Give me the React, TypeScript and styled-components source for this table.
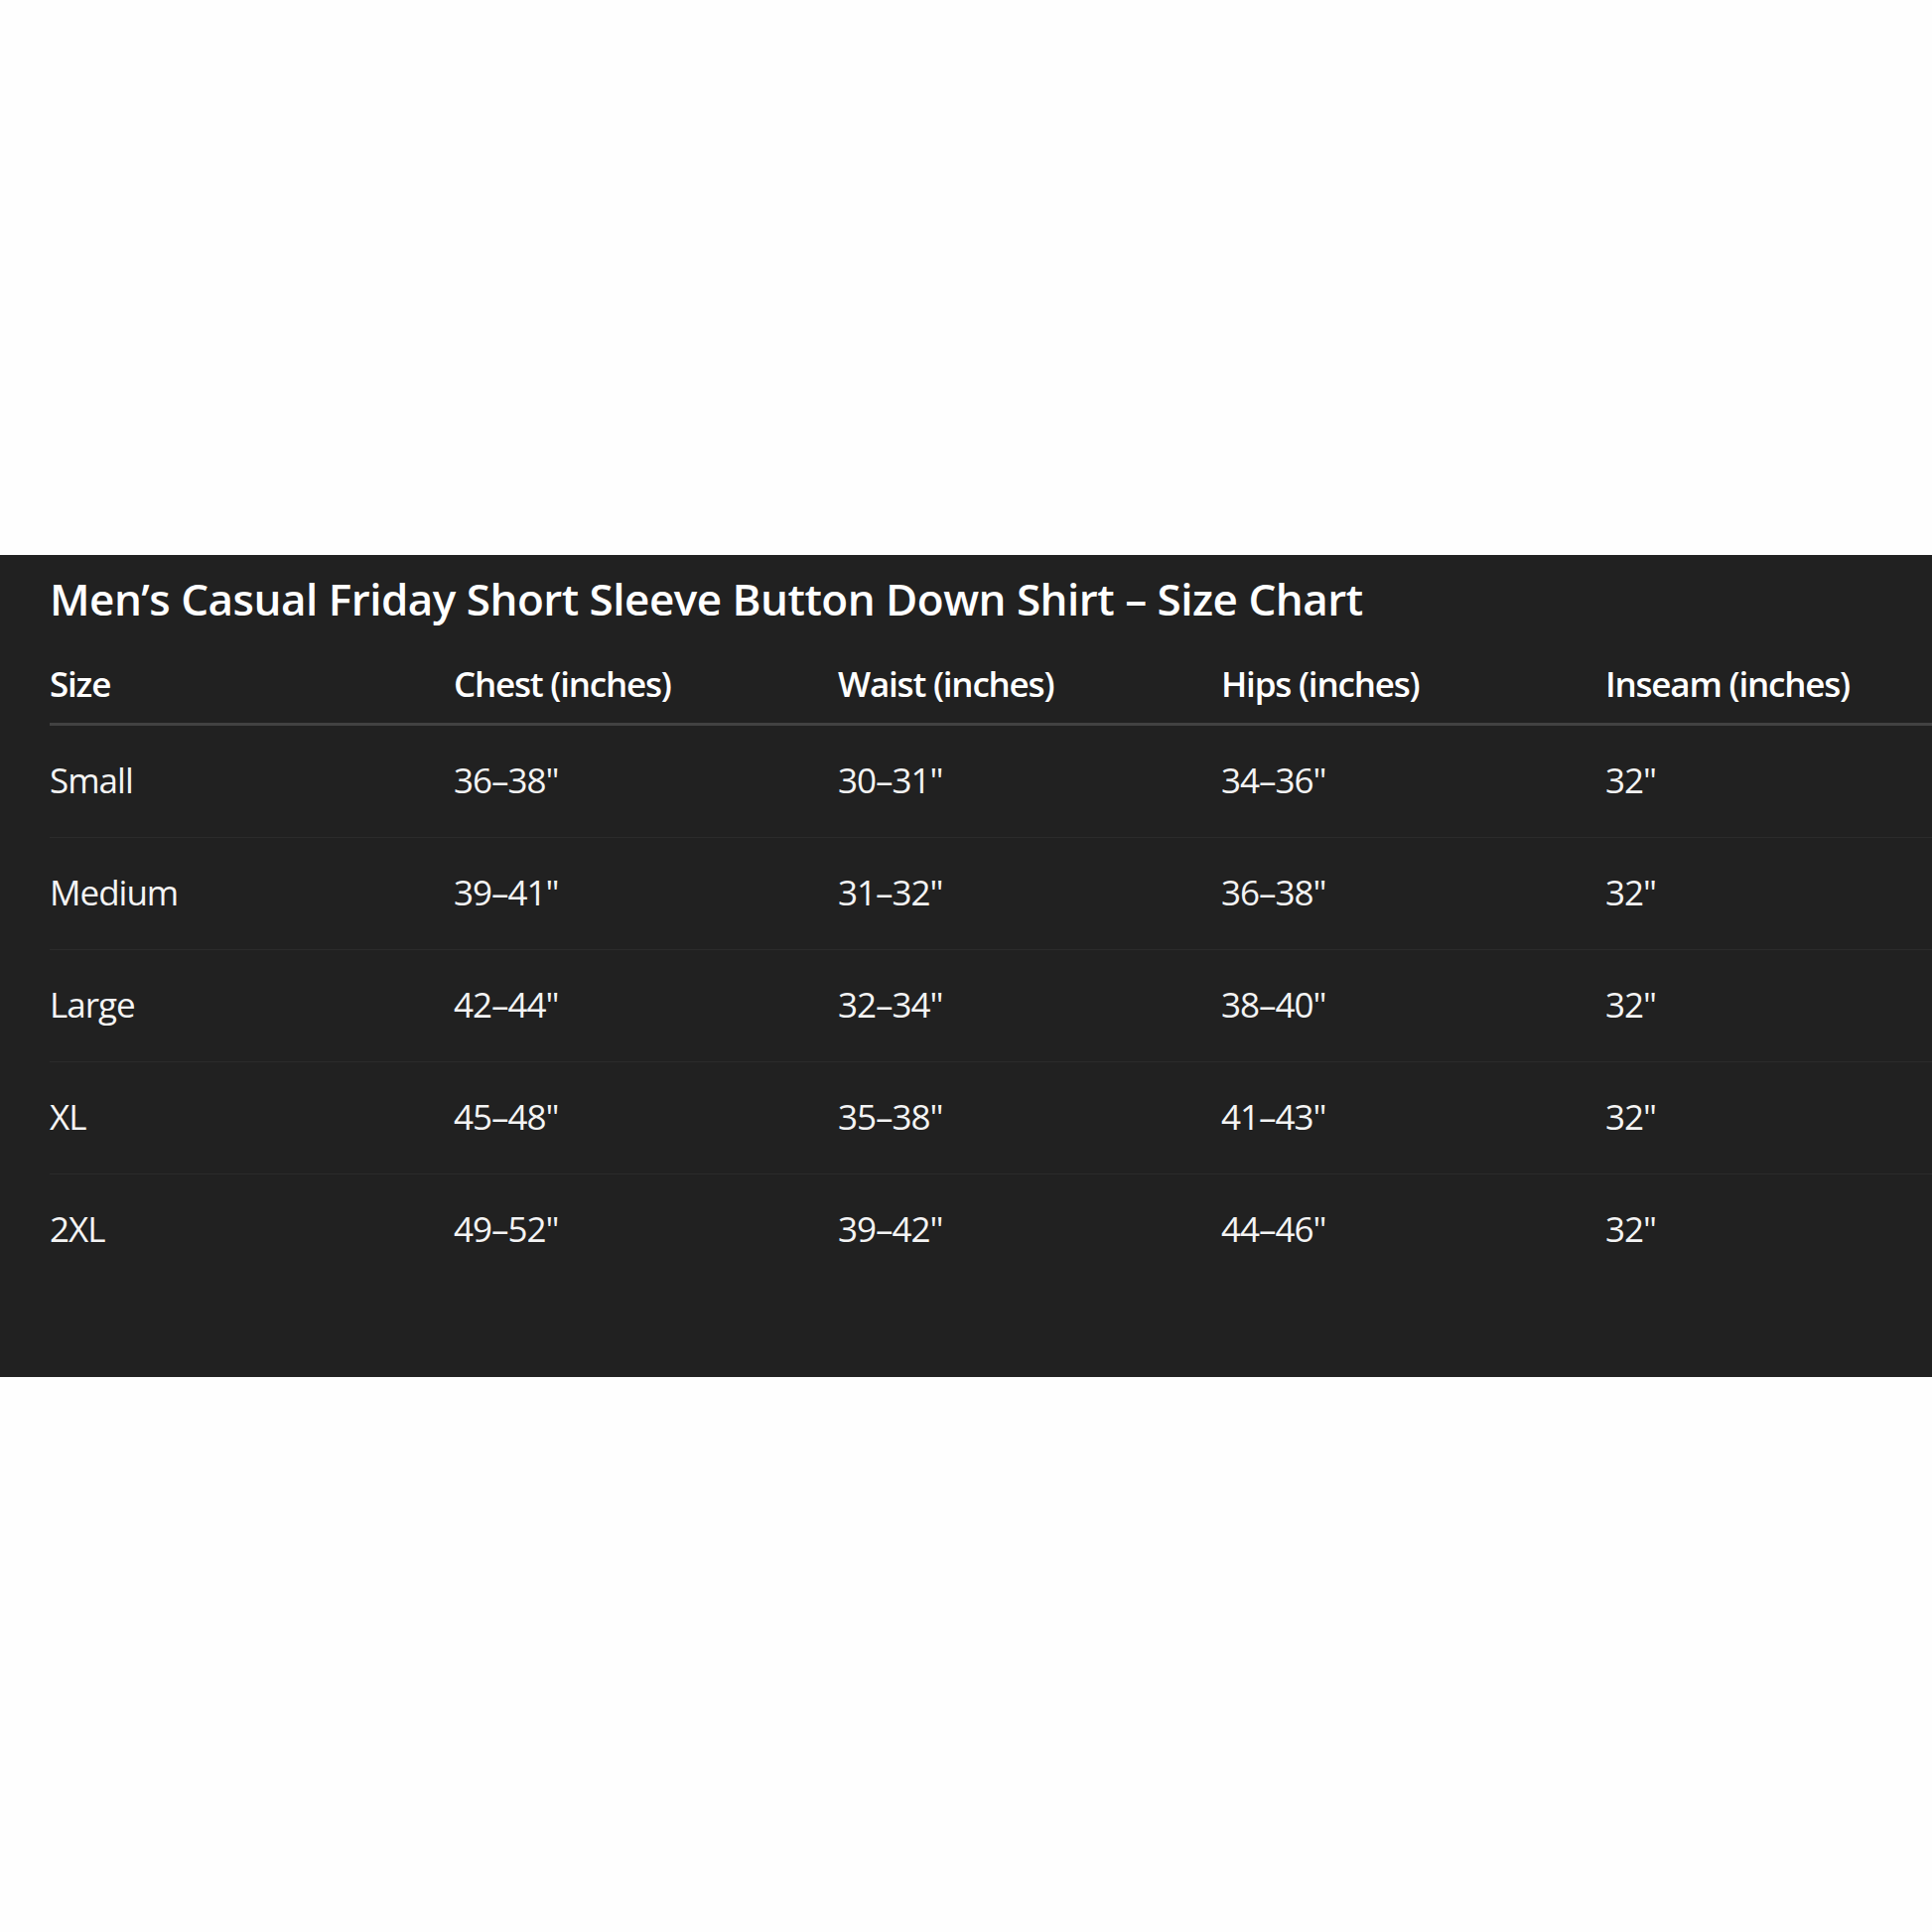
import React from 'react';
import styled, {createGlobalStyle} from "styled-components";

const GlobalStyle = createGlobalStyle`
  html, body {
    margin: 0;
    padding: 0;
    background: #fefefe;
  }
  * {
    box-sizing: border-box;
  }
`

const columns = ["Size", "Chest (inches)", "Waist (inches)", "Hips (inches)", "Inseam (inches)"];

const rows = [
    ["Small", "36–38\"", "30–31\"", "34–36\"", "32\""],
    ["Medium", "39–41\"", "31–32\"", "36–38\"", "32\""],
    ["Large", "42–44\"", "32–34\"", "38–40\"", "32\""],
    ["XL", "45–48\"", "35–38\"", "41–43\"", "32\""],
    ["2XL", "49–52\"", "39–42\"", "44–46\"", "32\""],
];

export default function App() {
    return (
        <>
            <GlobalStyle/>
            <Page>
                <Panel>
                    <Title>Men’s Casual Friday Short Sleeve Button Down Shirt – Size Chart</Title>
                    <Table>
                        <HeadRow>
                            {columns.map(c => <HeadCell key={c}>{c}</HeadCell>)}
                        </HeadRow>
                        {rows.map((r, i) => (
                            <Row key={r[0]} last={i === rows.length - 1}>
                                {r.map((v, j) => <Cell key={j}>{v}</Cell>)}
                            </Row>
                        ))}
                    </Table>
                </Panel>
            </Page>
        </>
    );
}

const Page = styled.div`
  min-height: 1946px;
  width: 1946px;
  display: flex;
  flex-direction: column;
  justify-content: center;
  overflow: hidden;
`
const Panel = styled.section`
  background-color: #212121;
  height: 828px;
  padding: 14px 0 0 50px;
  font-family: "Open Sans", "Noto Sans", sans-serif;
  color: #ffffff;
`
const Title = styled.h2`
  margin: 0 0 16px;
  font-size: 44px;
  line-height: 60px;
  font-weight: 600;
  letter-spacing: -0.5px;
  white-space: nowrap;
`
const Table = styled.div`
  display: flex;
  flex-direction: column;
`
const gridCols = `
  display: grid;
  grid-template-columns: 407px 387px 386px 387px 1fr;
  align-items: center;
`
const HeadRow = styled.div`
  ${gridCols};
  height: 82px;
  border-bottom: 3px solid #424242;
`
const HeadCell = styled.div`
  font-size: 35px;
  line-height: 48px;
  font-weight: 600;
  letter-spacing: -1.2px;
  white-space: nowrap;
`
const Row = styled.div<{ last?: boolean }>`
  ${gridCols};
  height: ${p => p.last ? "112px" : "113px"};
  border-bottom: ${p => p.last ? "none" : "1px solid #2b2b2b"};
  padding-bottom: 2px;
`
const Cell = styled.div`
  font-size: 35px;
  line-height: 48px;
  font-weight: 400;
  letter-spacing: -1px;
  color: #f4f4f4;
  white-space: nowrap;
`
